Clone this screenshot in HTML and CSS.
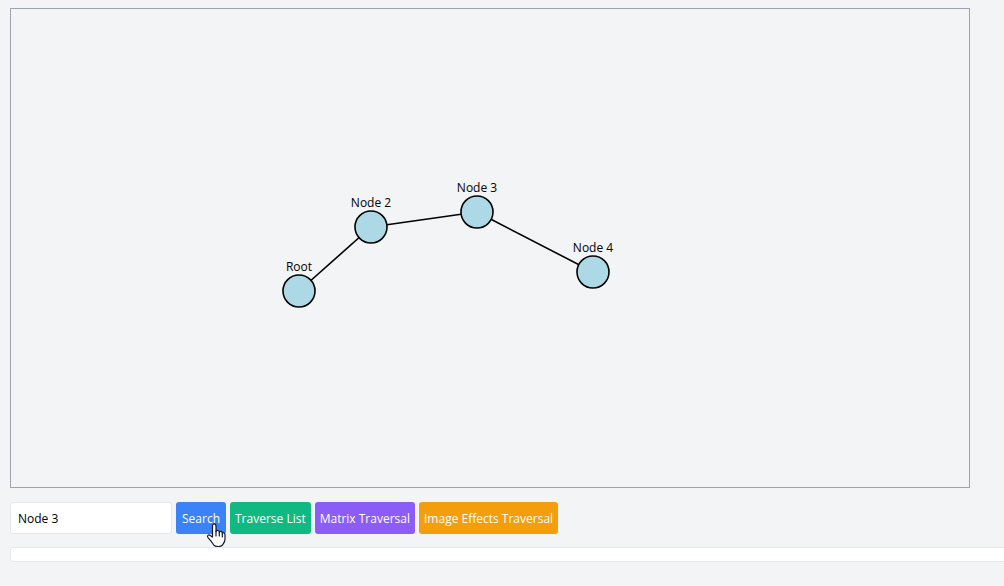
FILE: index.html
```html
<!DOCTYPE html>
<html lang="en">
<head>
  <meta charset="utf-8">
  <meta name="viewport" content="width=device-width, initial-scale=1">
  <title>Linked List Traversal</title>
  <link rel="stylesheet" href="styles.css">
</head>
<body>
  <main class="page">
    <section class="board" aria-label="Node graph">
      <svg class="graph" viewBox="0 0 958 478" role="img" aria-label="Linked nodes">
        <g class="edges">
          <line x1="288" y1="282" x2="360" y2="218"/>
          <line x1="360" y1="218" x2="466" y2="203"/>
          <line x1="466" y1="203" x2="582" y2="263"/>
        </g>
        <g class="nodes">
          <circle cx="288" cy="282" r="16"/>
          <circle cx="360" cy="218" r="16"/>
          <circle cx="466" cy="203" r="16"/>
          <circle cx="582" cy="263" r="16"/>
        </g>
        <g class="labels">
          <text x="288" y="262">Root</text>
          <text x="360" y="198">Node 2</text>
          <text x="466" y="183">Node 3</text>
          <text x="582" y="243">Node 4</text>
        </g>
      </svg>
    </section>
    <form class="toolbar">
      <input class="search-field" type="text" value="Node 3" aria-label="Node name">
      <span class="search-wrap">
        <button class="btn btn-search" type="button">Search</button>
        <svg class="pointer" viewBox="0 0 20 26" aria-hidden="true">
          <path d="M6.5 15V4.2C6.5 1 10 1 10 4.2V9.4C11 7.9 13 8.3 13.3 10C14.4 8.8 16 9.3 16.3 10.9C17.7 10.1 19 11.1 19 12.7V17C19 20 17.8 21 16.6 22.8C15 25.1 9.2 25 7.6 22.8C6.2 20.4 4.3 18 2.2 15.8C.4 13.7 2.5 12.2 4.2 13.4Z"/>
          <path d="M10 9v5M13.3 10v4M16.3 11v4"/>
        </svg>
      </span>
      <button class="btn btn-list" type="button">Traverse List</button>
      <button class="btn btn-matrix" type="button">Matrix Traversal</button>
      <button class="btn btn-image" type="button">Image Effects Traversal</button>
    </form>
    <output class="result" aria-label="Result"></output>
  </main>
</body>
</html>
```
FILE: styles.css
```css
* {
  box-sizing: border-box;
}

body {
  margin: 0;
  background: #f3f4f6;
  color: #000;
  font-family: "Segoe UI", "Open Sans", "Noto Sans", sans-serif;
  font-size: 12px;
  line-height: 20px;
  overflow-x: hidden;
}

.page {
  display: flex;
  flex-direction: column;
  padding: 8px 0 24px 10px;
}

.board {
  margin-right: 34px;
  border: 1px solid #9ca3af;
}

.graph {
  display: block;
  width: 100%;
  height: auto;
}

.edges,
.nodes {
  stroke: #000;
  stroke-width: 1.6;
}

.nodes {
  fill: #add8e6;
}

.labels {
  font-size: 12px;
  text-anchor: middle;
}

.toolbar {
  display: flex;
  flex-wrap: wrap;
  gap: 4px;
  margin: 14px 0 13px;
}

.search-field,
.btn {
  height: 32px;
  border-radius: 3px;
  font: inherit;
}

.search-field {
  width: 162px;
  padding: 0 7px;
  border: 1px solid #e5e7eb;
  background: #fff;
  color: #000;
}

.search-wrap {
  position: relative;
}

.btn {
  min-width: 50px;
  padding: 2px 5px 0;
  border: 0;
  color: #fff;
  cursor: pointer;
}

.btn-search {
  background: #3b82f6;
}

.btn-list {
  background: #10b981;
}

.btn-matrix {
  background: #8b5cf6;
}

.btn-image {
  background: #f59e0b;
}

.pointer {
  position: absolute;
  top: 20px;
  left: 30px;
  z-index: 1;
  width: 20px;
  height: 26px;
  fill: #fff;
  stroke: #111827;
  stroke-width: 1.2;
  stroke-linejoin: round;
  stroke-linecap: round;
  pointer-events: none;
}

.result {
  display: block;
  min-height: 15px;
  margin-right: -4px;
  border: 1px solid #e5e7eb;
  border-radius: 3px;
  background: #fff;
}
```
